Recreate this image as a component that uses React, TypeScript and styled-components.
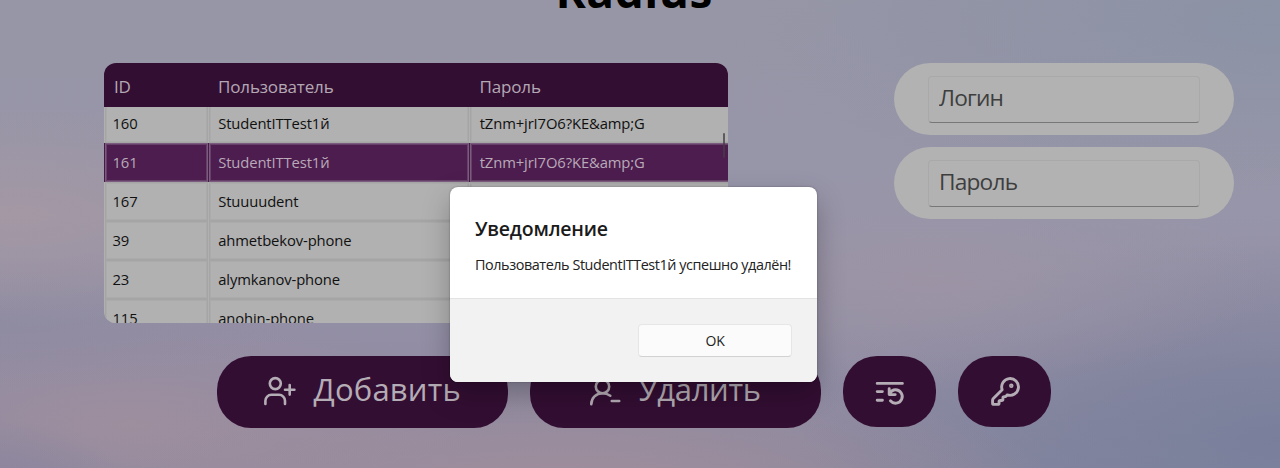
import React from "react";
import styled, { createGlobalStyle } from "styled-components";

const GlobalStyle = createGlobalStyle`
  * { box-sizing: border-box; }
  body { margin: 0; overflow: hidden; font-family: "Open Sans", "Noto Sans", sans-serif; }
`;

const Page = styled.div`
  width: 1280px;
  height: 468px;
  overflow: hidden;
  background:
    radial-gradient(ellipse 120px 60px at 0px 480px, rgba(138, 132, 157, 0.8), rgba(138, 132, 157, 0) 100%),
    radial-gradient(ellipse 330px 110px at 20px 215px, rgba(165, 152, 163, 0.9), rgba(165, 152, 163, 0) 100%),
    radial-gradient(ellipse 300px 70px at 0px 320px, rgba(142, 138, 160, 0.8), rgba(142, 138, 160, 0) 100%),
    radial-gradient(ellipse 500px 130px at 560px 495px, rgba(163, 143, 155, 1), rgba(163, 143, 155, 0) 100%),
    radial-gradient(ellipse 360px 110px at 130px 425px, rgba(160, 143, 158, 0.9), rgba(160, 143, 158, 0) 100%),
    radial-gradient(ellipse 340px 110px at 930px 280px, rgba(158, 149, 165, 0.8), rgba(158, 149, 165, 0) 100%),
    radial-gradient(ellipse 480px 200px at 1280px 440px, rgba(120, 127, 155, 0.95), rgba(120, 127, 155, 0) 100%),
    radial-gradient(ellipse 560px 180px at 1280px 20px, rgba(138, 146, 165, 0.9), rgba(138, 146, 165, 0) 100%),
    linear-gradient(180deg, #9796a6 0%, #9795a9 45%, #928da4 75%, #88879f 100%);
`;

const Title = styled.h1`
  display: flow-root;
  margin: 0 0 0 555.5px;
  height: 63px;
  font-size: 46px;
  line-height: 62px;
  letter-spacing: 0.5px;
  font-weight: 700;
  color: #000;
  & > span { display: block; margin-top: -41px; }
`;

const Content = styled.div`
  display: flex;
  justify-content: space-between;
  align-items: flex-start;
  padding: 0 46.5px 0 103.5px;
  height: 292.5px;
`;

const Table = styled.div`
  width: 624px;
  height: 259.5px;
  border-radius: 12px;
  overflow: hidden;
  background: #a9a9a9;
  display: flex;
  flex-direction: column;
`;

const columns = "104px 261.5px 260px";

const TableHead = styled.div`
  display: grid;
  grid-template-columns: ${columns};
  flex: none;
  height: 44px;
  line-height: 47px;
  background: #330e33;
  color: #b3a8b3;
  font-size: 17px;
  letter-spacing: -0.15px;
  & > span { padding-left: 10.5px; }
`;

const TableBody = styled.div`
  flex: 1;
  min-height: 0;
  overflow: hidden;
  display: flex;
  position: relative;
`;

const Rows = styled.div`
  margin-top: -3px;
  flex: 1;
`;

const Row = styled.div<{ $selected?: boolean }>`
  display: grid;
  grid-template-columns: ${columns};
  height: 39.1px;
  font-size: 14.8px;
  letter-spacing: -0.12px;
  line-height: 37px;
  background: ${(p) => (p.$selected ? "#451c47" : "#b0b0b0")};
  color: ${(p) => (p.$selected ? "#b9a9b9" : "#101010")};
  & > span {
    margin: 0 0 0 1px;
    padding-left: 8.7px;
    border: 1px solid ${(p) => (p.$selected ? "#7c5c7e" : "#a5a5a5")};
    background: ${(p) => (p.$selected ? "#4c1d4e" : "#b1b1b1")};
    box-shadow: inset 0 0 0 1px ${(p) => (p.$selected ? "#664068" : "#ababab")};
  }
  & > span:first-child { padding-left: 7px; }
  & > span:last-child { margin-right: -3px; }
`;

const ScrollThumb = styled.div`
  position: absolute;
  right: 3px;
  top: 26px;
  width: 2px;
  height: 25px;
  border-radius: 1px;
  background: rgba(70, 60, 70, 0.75);
`;

const Fields = styled.div`
  display: flex;
  flex-direction: column;
  gap: 12px;
`;

const FieldPill = styled.label`
  width: 339.5px;
  height: 72px;
  padding: 13px 34px;
  border-radius: 36px;
  background: #b2b2b2;
`;

const Input = styled.input`
  display: block;
  width: 272px;
  height: 47px;
  padding: 0 10px 4px;
  border: 1px solid #a9a9a9;
  border-bottom: 1.5px solid #777;
  border-radius: 4px;
  background: #b2b2b2;
  outline: none;
  font: 22.7px "Open Sans", "Noto Sans", sans-serif;
  letter-spacing: -0.8px;
  &::placeholder { color: #3e3e3e; opacity: 1; }
`;

const Actions = styled.div`
  display: flex;
  align-items: flex-start;
  gap: 22.5px;
  padding-left: 217px;
`;

const ActionButton = styled.button<{ $compact?: boolean }>`
  display: flex;
  align-items: center;
  justify-content: ${(p) => (p.$compact ? "center" : "flex-start")};
  gap: 17.5px;
  width: ${(p) => (p.$compact ? "92.5px" : "290.5px")};
  height: ${(p) => (p.$compact ? "71.5px" : "72.5px")};
  padding: ${(p) => (p.$compact ? "0 0 0 2px" : "0 0 0 43px")};
  border: 0;
  border-radius: 34px;
  background: #330e33;
  color: #b5adb5;
  font: 31px "Open Sans", "Noto Sans", sans-serif;
  & > svg {
    flex: none;
    fill: none;
    stroke: currentColor;
    stroke-width: ${(p) => (p.$compact ? 2.9 : 2.6)};
    stroke-linecap: round;
    stroke-linejoin: round;
  }
`;

const ActionLabel = styled.span<{ $tracking: number }>`
  margin-top: -5px;
  line-height: 40px;
  letter-spacing: ${(p) => p.$tracking}px;
`;

const Dialog = styled.section`
  position: absolute;
  left: 450px;
  top: 187px;
  width: 367px;
  height: 195px;
  border-radius: 8px;
  overflow: hidden;
  background: #fff;
  box-shadow: 0 12px 28px rgba(0, 0, 0, 0.26), 0 0 2px rgba(0, 0, 0, 0.35);
  display: flex;
  flex-direction: column;
`;

const DialogBody = styled.div`
  height: 111px;
  padding: 28px 25px 0;
  white-space: nowrap;
`;

const DialogTitle = styled.h2`
  margin: 0;
  font-size: 19.5px;
  line-height: 28px;
  font-weight: 600;
  letter-spacing: -0.2px;
  color: #1b1b1b;
`;

const DialogText = styled.p`
  margin: 12px 0 0;
  font-size: 14.4px;
  line-height: 20px;
  letter-spacing: -0.43px;
  color: #222;
`;

const DialogFooter = styled.div`
  flex: 1;
  display: flex;
  justify-content: flex-end;
  align-items: flex-start;
  padding: 25px 25px 0;
  border-top: 1px solid #e3e3e3;
  background: #f2f2f2;
`;

const OkButton = styled.button`
  width: 154px;
  height: 33px;
  border: 1px solid #e6e6e6;
  border-bottom-color: #d2d2d2;
  border-radius: 4px;
  background: #fbfbfb;
  color: #222;
  font: 14px "Open Sans", "Noto Sans", sans-serif;
  letter-spacing: -0.3px;
`;

const users = [
  { id: "160", name: "StudentITTest1й", password: "tZnm+jrI7O6?KE&amp;G" },
  { id: "161", name: "StudentITTest1й", password: "tZnm+jrI7O6?KE&amp;G", selected: true },
  { id: "167", name: "Stuuuudent", password: "" },
  { id: "39", name: "ahmetbekov-phone", password: "" },
  { id: "23", name: "alymkanov-phone", password: "" },
  { id: "115", name: "anohin-phone", password: "" },
];

const UserAddIcon = () => (
  <svg width="36" height="32" viewBox="0 0 36 32">
    <circle cx="15.300" cy="7.600" r="5.500" />
    <path d="M5.400 28v-3.200a6 6 0 0 1 6-6h7.600a6 6 0 0 1 6 6V28M29.700 9v9.600M25 13.800h9.400" />
  </svg>
);

const UserRemoveIcon = () => (
  <svg width="48" height="32" viewBox="0 0 48 32">
    <circle cx="29.500" cy="10.500" r="6.700" />
    <path d="M18.300 28.200c0-6.200 4.800-10.900 11.200-10.900 3 0 5.600.9 7.800 2.400M38.800 25h7.400" />
  </svg>
);

const RestoreListIcon = () => (
  <svg width="32" height="32" viewBox="0 0 32 32">
    <path d="M3.200 8.400h25.200M3.200 16.600h5.200M3.200 25.200h5.200" />
    <path d="M15.200 13.600v6h6M15.400 19.200c1.400-3 3.600-4.400 6.200-4.400a6.700 6.700 0 1 1-5.200 11" />
  </svg>
);

const KeyIcon = () => (
  <svg width="31" height="31" viewBox="0 0 24 24">
    <g strokeWidth="2.250">
      <path d="M2.586 17.414A2 2 0 0 0 2 18.828V21a1 1 0 0 0 1 1h3a1 1 0 0 0 1-1v-1a1 1 0 0 1 1-1h1a1 1 0 0 0 1-1v-1a1 1 0 0 1 1-1h.172a2 2 0 0 0 1.414-.586l.814-.814a6.500 6.500 0 1 0-4-4z" />
      <circle cx="16.500" cy="7.500" r=".6" fill="currentColor" />
    </g>
  </svg>
);

export default function App() {
  return (
    <Page>
      <GlobalStyle />
      <Title><span>Radius</span></Title>
      <Content>
        <Table>
          <TableHead>
            <span>ID</span>
            <span>Пользователь</span>
            <span>Пароль</span>
          </TableHead>
          <TableBody>
            <Rows>
              {users.map((u) => (
                <Row key={u.id} $selected={u.selected}>
                  <span>{u.id}</span>
                  <span>{u.name}</span>
                  <span>{u.password}</span>
                </Row>
              ))}
            </Rows>
            <ScrollThumb />
          </TableBody>
        </Table>
        <Fields>
          <FieldPill><Input placeholder="Логин" /></FieldPill>
          <FieldPill><Input placeholder="Пароль" /></FieldPill>
        </Fields>
      </Content>
      <Actions>
        <ActionButton><UserAddIcon /><ActionLabel $tracking={0.2}>Добавить</ActionLabel></ActionButton>
        <ActionButton><UserRemoveIcon /><ActionLabel $tracking={-0.35}>Удалить</ActionLabel></ActionButton>
        <ActionButton $compact aria-label="Восстановить"><RestoreListIcon /></ActionButton>
        <ActionButton $compact aria-label="Ключ"><KeyIcon /></ActionButton>
      </Actions>
      <Dialog role="dialog">
        <DialogBody>
          <DialogTitle>Уведомление</DialogTitle>
          <DialogText>Пользователь StudentITTest1й успешно удалён!</DialogText>
        </DialogBody>
        <DialogFooter>
          <OkButton>OK</OkButton>
        </DialogFooter>
      </Dialog>
    </Page>
  );
}
